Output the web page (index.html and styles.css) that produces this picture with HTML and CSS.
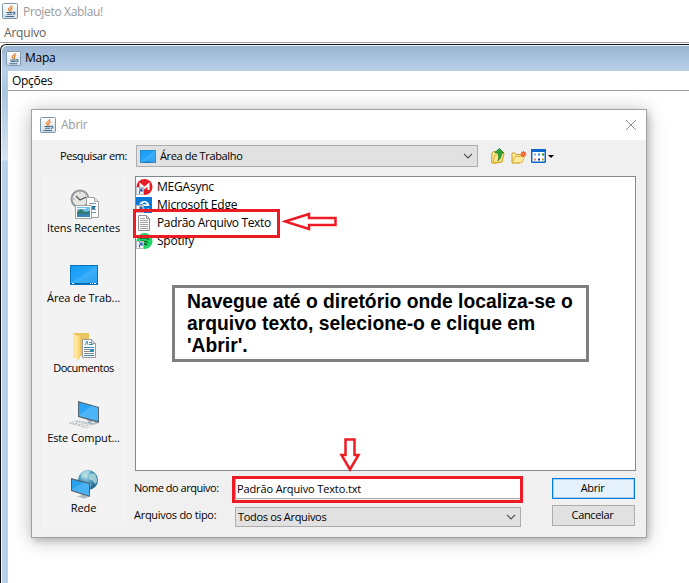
FILE: index.html
```html
<!DOCTYPE html>
<html lang="pt-BR">
<head>
<meta charset="utf-8">
<title>Projeto Xablau!</title>
<link rel="stylesheet" href="styles.css">
</head>
<body>
<svg class="defs" width="0" height="0">
  <defs>
    <linearGradient id="tile" x1="0" y1="0" x2="0" y2="1"><stop offset="0" stop-color="#fff"/><stop offset="1" stop-color="#d3dde6"/></linearGradient>
    <linearGradient id="screen" x1="0" y1="0" x2="1" y2="1"><stop offset="0" stop-color="#169bf3"/><stop offset=".55" stop-color="#25a6fa"/><stop offset="1" stop-color="#1192ea"/></linearGradient>
    <linearGradient id="folder" x1="0" y1="0" x2="1" y2="1"><stop offset="0" stop-color="#fff3b0"/><stop offset="1" stop-color="#f3c548"/></linearGradient>
    <radialGradient id="globe" cx=".4" cy=".3" r=".7"><stop offset="0" stop-color="#b9e2f0"/><stop offset=".5" stop-color="#4a9cbd"/><stop offset="1" stop-color="#1d5f88"/></radialGradient>
    <symbol id="java" viewBox="0 0 16 16">
      <rect x=".5" y=".5" width="15" height="15" rx="1" fill="url(#tile)" stroke="#7d95a8"/>
      <path d="M9.8 2.2C10 4 6.300 4.700 6.500 6.300c.1.900 1.400 1.500 1.300 2.400M10.800 4.600C9.500 5.200 8.400 5.900 8.800 6.800c.3.600.5.900 0 1.700" fill="none" stroke="#ea7d24" stroke-width="1.200"/>
      <path d="M4.500 9.500h6.300M5 11.300h5.200M3.500 13.500h8.500M11 9.300c2.700-.6 2.500 1.700 0 2.200" fill="none" stroke="#41698a" stroke-width="1.100"/>
    </symbol>
    <symbol id="shortcut" viewBox="0 0 8 8">
      <rect x=".5" y=".5" width="7" height="7" fill="#f5f8fc" stroke="#b5b9c0"/>
      <path d="M3 2h3v3M5.800 2.200L3.500 4.200V6.500" fill="none" stroke="#2a61a5" stroke-width="1.200"/>
    </symbol>
    <symbol id="desk" viewBox="0 0 28 20">
      <rect x=".5" y=".5" width="27" height="19" fill="url(#screen)" stroke="#0873bd"/>
      <path d="M1 18L26 1h1v17z" fill="#fff" opacity=".1"/>
      <path d="M1 18.500h26" stroke="#0868ad"/>
      <path d="M2 18.500h2M20 18.500h1M22 18.500h1M24 18.500h2" stroke="#fff"/>
    </symbol>
  </defs>
</svg>

<header class="app-title"><svg width="16" height="16"><use href="#java"/></svg><span>Projeto Xablau!</span></header>
<nav class="app-menu">Arquivo</nav>

<main class="frame">
  <div class="frame-title"><svg width="15" height="15"><use href="#java"/></svg><span>Mapa</span></div>
  <div class="frame-body"><nav class="frame-menu">Opções</nav></div>
</main>

<section class="dialog">
  <header class="dialog-title">
    <svg width="16" height="16"><use href="#java"/></svg><span>Abrir</span>
    <svg class="close" width="12" height="12" viewBox="0 0 12 12"><path d="M1 1l10 10M11 1L1 11" stroke="#8c8c8c" fill="none"/></svg>
  </header>
  <div class="lookup">
    <label>Pesquisar em:</label>
    <div class="combo place">
      <svg width="16" height="13" viewBox="0 0 28 20" preserveAspectRatio="none"><use href="#desk"/></svg>
      <span>Área de Trabalho</span>
      <svg class="chevron" width="10" height="6" viewBox="0 0 10 6"><path d="M1 .8l4 4 4-4" stroke="#505050" stroke-width="1.200" fill="none"/></svg>
    </div>
    <svg class="tool up" width="14" height="16" viewBox="0 0 14 16">
      <path d="M1 5l2-2 3 1 5-1 2 2-2 9-9 1.500-1.500-1z" fill="url(#folder)" stroke="#cfa02a"/>
      <path d="M2 14L4 7l9-1-2.500 8z" fill="#ffe68a" stroke="#cfa02a" stroke-width=".7"/>
      <path d="M3.800 4.500L8.500.5l4 4.500-2.300.1c.2 4-1 6-3.200 7.500 1-2.500 1-4.500.3-7.600z" fill="#2da637" stroke="#107d1c" stroke-width=".8"/>
    </svg>
    <svg class="tool new" width="16" height="14" viewBox="0 0 16 14">
      <path d="M1 3h3l1 1.500h6V7L9 13H1z" fill="url(#folder)" stroke="#cfa02a"/>
      <path d="M1.500 13L4 6.500h9.500L11 12.500z" fill="#ffe99b" stroke="#d9ab38" stroke-width=".8"/>
      <path d="M12.500 1v6M9.500 4h6M10.500 2l4 4M14.500 2l-4 4" stroke="#f04b23" stroke-width="1.100"/><circle cx="12.500" cy="4" r="1" fill="#ffb347"/>
    </svg>
    <svg class="tool view" width="23" height="14" viewBox="0 0 23 14">
      <rect x=".75" y=".75" width="13.500" height="12.500" rx=".5" fill="#fff" stroke="#0b68cf" stroke-width="1.500"/><path d="M0 1.500h15" stroke="#0b68cf" stroke-width="3"/>
      <path d="M3 5.500h2" stroke="#a49bc8" stroke-width="2"/><path d="M7 5.500h2" stroke="#1b80dd" stroke-width="2"/><path d="M11 5.500h2" stroke="#159326" stroke-width="2"/>
      <path d="M3 10.500h2" stroke="#f47b55" stroke-width="2"/><path d="M7 10.500h2" stroke="#15339b" stroke-width="2"/><path d="M11 10.500h2" stroke="#d2a11f" stroke-width="2"/>
      <path d="M17 6h6l-3 3z" fill="#000"/>
    </svg>
  </div>

  <div class="dialog-body">
    <aside class="places">
      <div class="item">
        <svg width="32" height="32" viewBox="0 -1 32 32">
          <circle cx="12" cy="10" r="8.500" fill="#e5e6e2" stroke="#92989b" stroke-width="2"/><path d="M8 7l4 4 6-3" fill="none" stroke="#555" stroke-width="1.300"/><path d="M12 3.500v1M5.500 10h1M12 16v1" stroke="#777"/>
          <path d="M18.500 8.500h8l4 4v16h-12z" fill="#fff" stroke="#a0a0a0"/><path d="M26.500 8.500v4h4" fill="#e3e3e3" stroke="#aaa"/><path d="M21 14.500h7M21 17.500h7M21 20.500h7M21 23.500h7" stroke="#7394aa"/><path d="M24 17h3v3h-3z" fill="#287caf"/>
          <path d="M7.500 16.500h16v13h-16z" fill="#fff" stroke="#a0a0a0"/><path d="M9 18h13v10H9z" fill="#72bfe8"/><path d="M9 23l4-3 4 3 5-1v3H9z" fill="#317b71"/><path d="M9 25h13v3H9z" fill="#3a83b5"/><path d="M9 19.500h9" stroke="#e8f6fc"/>
        </svg><span>Itens Recentes</span></div>
      <div class="item">
        <svg width="32" height="32" viewBox="0 0 32 32"><use href="#desk" x="2" y="7" width="28" height="20"/></svg><span>Área de Trab...</span></div>
      <div class="item">
        <svg width="32" height="32" viewBox="0 -2 32 32">
          <path d="M5 3h16v23H5z" fill="#eac45e"/><path d="M5 3l5 3v24l-5-3z" fill="#ffe69a"/><path d="M10 6l2-1v23l-2 2z" fill="#f8d675"/>
          <path d="M14.500 9.500h9l4 4v14h-13z" fill="#fff" stroke="#999"/><path d="M23.500 9.500v4h4" fill="#ddd" stroke="#999"/><path d="M17 15l2-4 1 4M21 12.500h2M21 14.500h4M16 17.500h10M16 25.500h10" fill="none" stroke="#3688b8"/><path d="M16 19.500h6M16 21.500h6M16 23.500h10" stroke="#888"/><path d="M22 19h4v3h-4z" fill="#3b88b5"/>
        </svg><span>Documentos</span></div>
      <div class="item">
        <svg width="32" height="32" viewBox="0 -1 32 32">
          <path d="M1 24l8-2.500 17 3-7 4.500z" fill="#f5f6f7" stroke="#b5bbc0" stroke-width=".6"/><path d="M4 24l16 3M8 22.500l15 3M5 25.500l8-3M10 26.500l8-3M15 27.500l7-3" stroke="#a9b0b6" stroke-width=".8" stroke-dasharray="2 1"/>
          <path d="M19 20l5 1v3l4-1 2 1.500-5 1.500-7-2 2-1z" fill="#aebac4"/>
          <path d="M10 2l21 6v16l-21-6z" fill="#56646e"/><path d="M11 3.500l19 5.300v13.300L11 17z" fill="#29a5f4"/><path d="M11 16L24 7l6 1.800v13.300L11 17z" fill="#63bff8" opacity=".6"/>
        </svg><span>Este Comput...</span></div>
      <div class="item">
        <svg width="32" height="32" viewBox="0 -1 32 32">
          <circle cx="20" cy="11" r="10" fill="url(#globe)"/><path d="M13 5c3-4 7-4 10-3l-3 3-2 3-4 1zM22 5l5-.5 2.500 7-2 4-3-4-3-1zM19 13l4 2-1 5-3 1z" fill="#b8dfdf" opacity=".75"/>
          <path d="M13 24l4 1v2l4 .5-4 2-8-2 4-1z" fill="#aeb9c2"/>
          <path d="M3 9l19 5v14L3 22z" fill="#53636e"/><path d="M4 10.500l17 4.500v11.500L4 21z" fill="#27a0ee"/><path d="M4 20l12-6.500 5 1.500v11.500L4 21z" fill="#60bcf5" opacity=".6"/>
        </svg><span>Rede</span></div>
    </aside>

    <div class="main">
      <ul class="files">
        <li><svg width="17" height="17" viewBox="0 0 17 17"><circle cx="8.500" cy="8" r="8" fill="#e51c24"/><path d="M4.500 11V5.500L8.500 9l4-3.500V11" fill="none" stroke="#fff" stroke-width="2"/><use href="#shortcut" x="0" y="8" width="8" height="8"/></svg><span>MEGAsync</span></li>
        <li><svg width="17" height="17" viewBox="0 0 17 17"><path d="M0 0h16v16H0z" fill="#0878d7"/><path d="M3 7.500c1-4 9.500-6 10.500 1.500H6c0 3.500 5 3.500 7 2v2.500c-3 1.500-8 1-8-3.500 0-2 1.500-3 3-3.500" fill="#fff"/><path d="M6.500 7.300h4c0-2.500-3.500-2.500-4 0z" fill="#0878d7"/><use href="#shortcut" x="0" y="8" width="8" height="8"/></svg><span>Microsoft Edge</span></li>
        <li class="text-file"><svg width="17" height="17" viewBox="0 0 17 17"><path d="M2.500.5h8l3 3v12h-11z" fill="#f7f7f7" stroke="#8f8f8f"/><path d="M10.500.5v3h3" fill="none" stroke="#999"/><path d="M4 3.500h5M4 5.500h8M4 7.500h8M4 9.500h8M4 11.500h8M4 13.500h8" stroke="#a5a5a5"/></svg><span>Padrão Arquivo Texto</span></li>
        <li><svg width="17" height="17" viewBox="0 0 17 17"><circle cx="8.500" cy="8" r="8" fill="#1fd663"/><path d="M4 5.500c3-1 6.500-.5 9 1M5 8.500c2.500-.8 5-.3 7 1M6 11c2-.5 3.500-.2 5 .8" fill="none" stroke="#174f2b" stroke-width="1.400"/><use href="#shortcut" x="0" y="8" width="8" height="8"/></svg><span>Spotify</span></li>
      </ul>
      <div class="form">
        <label class="name-label">Nome do arquivo:</label>
        <div class="field">Padrão Arquivo Texto.txt</div>
        <button class="primary">Abrir</button>
        <label>Arquivos do tipo:</label>
        <div class="combo type"><span>Todos os Arquivos</span><svg class="chevron" width="10" height="6" viewBox="0 0 10 6"><path d="M1 .8l4 4 4-4" stroke="#505050" stroke-width="1.200" fill="none"/></svg></div>
        <button>Cancelar</button>
      </div>
    </div>
  </div>
</section>

<div class="mark mark-file"></div>
<div class="mark mark-name"></div>
<svg class="arrow arrow-left" width="56" height="19" viewBox="0 0 56 19"><path d="M3 9.500L27 2v4h26.500v7H27v4z" fill="none" stroke="#ed1c24" stroke-width="2.500"/></svg>
<svg class="arrow arrow-down" width="22" height="34" viewBox="0 0 22 34"><path d="M6.500 1.500h9v15.500h4L11 31.500 2.500 17h4z" fill="none" stroke="#ed1c24" stroke-width="2.500"/></svg>
<p class="callout">Navegue até o diretório onde localiza-se o<br>arquivo texto, selecione-o e clique em<br>'Abrir'.</p>
</body>
</html>
```

FILE: styles.css
```css
* { box-sizing: border-box; }
html, body { height: 100%; }
body {
  margin: 0;
  overflow: hidden;
  position: relative;
  display: flex;
  flex-direction: column;
  background: #fff;
  color: #000;
  font: 12px/16px "Open Sans", "Noto Sans", sans-serif;
}
svg { display: block; flex: none; }
.defs { position: absolute; }
span, label, nav { white-space: nowrap; }

.app-title { display: flex; gap: 5px; height: 24px; padding: 3px 0 0 2px; color: #999; letter-spacing: -.33px; }
.app-title span { padding-top: 1px; }
.app-menu { height: 19px; padding: 1px 0 0 4px; color: #606060; border-bottom: 1px solid #a0a0a0; letter-spacing: -.2px; }

.frame {
  flex: 1;
  margin-top: 1px;
  display: flex;
  flex-direction: column;
  border: solid #111;
  border-width: 1px 0 0 1px;
  border-top-left-radius: 6px;
  background: linear-gradient(#99b4d1, #b9d1ea 26px, #a9c5e0 45px, #d7e4f2 115px, #b9d1ea 116px);
  box-shadow: inset 1px 1px #f4f8fc;
}
.frame-title { display: flex; align-items: center; gap: 4px; height: 26px; padding-left: 5px; letter-spacing: -.25px; }
.frame-body { flex: 1; margin-left: 7px; background: #fff; }
.frame-menu { height: 20px; padding: 2px 0 0 4px; border-bottom: 1px solid #a0a0a0; letter-spacing: -.3px; }

.dialog {
  position: absolute;
  left: 31px;
  top: 109px;
  width: 616px;
  height: 429px;
  border: 1px solid #a0a0a0;
  background: #f0f0f0;
  box-shadow: 0 2px 18px rgba(0, 0, 0, .27), 2px 3px 6px rgba(0, 0, 0, .15);
}
.dialog-title { display: flex; align-items: center; gap: 5px; height: 30px; padding: 0 9px 0 8px; background: #fff; color: #999; letter-spacing: -.25px; }
.close { margin-left: auto; }
.lookup { display: flex; height: 36px; padding: 5px 0 0 28px; }
.lookup label { width: 76px; padding-top: 3px; font-size: 11px; letter-spacing: -.4px; }
.combo { display: flex; align-items: center; border: 1px solid #adadad; background: #e1e1e1; font-size: 11px; }
.chevron { margin-left: auto; }
.place { width: 342px; height: 22px; gap: 4px; padding: 0 4px 0 3px; letter-spacing: -.35px; }
.tool.up { margin: 3px 0 0 13px; }
.tool.new { margin: 5px 0 0 6px; }
.tool.view { margin: 4px 0 0 4px; }

.dialog-body { display: flex; gap: 8px; padding-left: 10px; }
.places { width: 85px; height: 351px; padding: 12px 2px 0 0; background: #f3f3f3; }
.item { display: flex; flex-direction: column; align-items: center; height: 70px; font-size: 11px; letter-spacing: -.1px; }
.item:nth-child(3) span { letter-spacing: -.5px; }
.item span { line-height: 16px; }

.files { width: 501px; height: 295px; margin: 0; padding: 1px 0 0 1px; list-style: none; border: 1px solid #828790; background: #fff; }
.files li { display: flex; align-items: center; gap: 4px; height: 18px; letter-spacing: -.22px; }
.files svg { margin-left: -1px; }
.files .text-file { letter-spacing: -.35px; }
.form { display: grid; grid-template-columns: 100px 286px 83px; column-gap: 0; row-gap: 6px; padding-top: 7px; font-size: 11px; }
.form label { padding-top: 2px; letter-spacing: -.28px; margin-left: -1px; }
.form .name-label { letter-spacing: -.47px; }
.form button { width: 83px; height: 21px; margin-left: 31px; padding: 0 2px 2px 0; border: 1px solid #adadad; background: #e1e1e1; color: #000; font: inherit; letter-spacing: -.35px; }
.form .primary { border-color: #0078d7; background: #e5f1fb; box-shadow: inset 0 0 0 1px #a9d1f5; }
.field { height: 21px; padding: 2px 1px; border: 1px solid #abadb3; background: #fff; letter-spacing: -.13px; }
.type { height: 20px; margin-top: 2px; padding: 0 4px 0 2px; letter-spacing: -.33px; }

.mark { position: absolute; border: 3px solid #ed1c24; }
.mark-file { left: 133px; top: 209px; width: 147px; height: 29px; }
.mark-name { left: 232px; top: 476px; width: 291px; height: 27px; }
.arrow { position: absolute; }
.arrow-left { left: 282px; top: 212px; }
.arrow-down { left: 339px; top: 438px; }
.callout {
  position: absolute;
  left: 172px;
  top: 285px;
  width: 417px;
  height: 77px;
  margin: 0;
  padding: 3px 0 0 12px;
  border: 3px solid #7f7f7f;
  background: #fff;
  font: bold 19.300px/22px "Liberation Sans", Arial, sans-serif;
  white-space: nowrap;
}
```
